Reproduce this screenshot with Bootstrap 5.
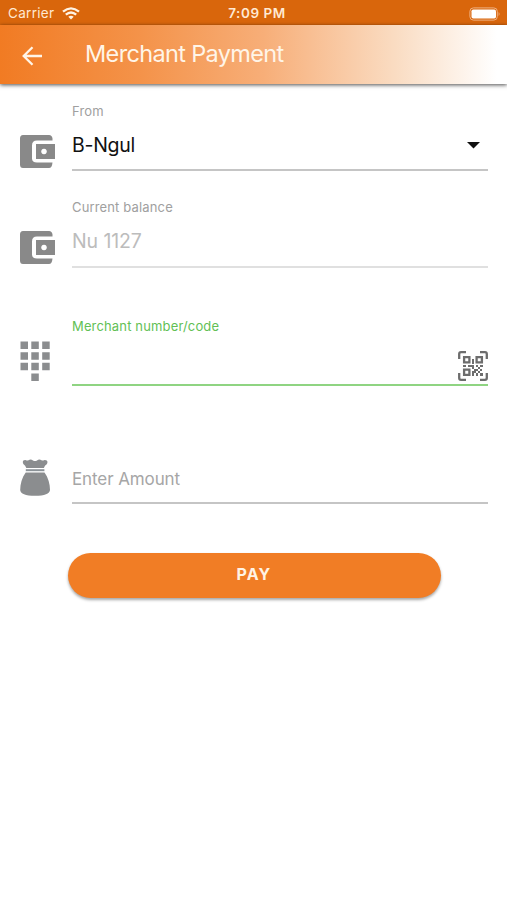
<!DOCTYPE html>
<html lang="en">
<head>
<meta charset="utf-8">
<meta name="viewport" content="width=device-width, initial-scale=1">
<title>Merchant Payment</title>
<link href="https://cdn.jsdelivr.net/npm/bootstrap@5.3.0/dist/css/bootstrap.min.css" rel="stylesheet">
<style>
body{font-family:Inter,"Liberation Sans",sans-serif;background:#fff;color:#111;min-height:900px;overflow:hidden}
.status{height:25px;background:#d9660c;color:#ffe9d2;font-size:13.5px;line-height:25px;padding:2px 6px 0 8px}
.status>*{flex:1 1 0}
.carrier{letter-spacing:.3px}
.clock{font-weight:600;font-size:13.5px;letter-spacing:.55px;padding-left:5px;white-space:nowrap}
.appbar{height:59px;background:linear-gradient(90deg,#f17b23 0%,#f4934a 28%,#f7ae78 52%,#fadcc2 78%,#fff 98%);box-shadow:0 1px 4px rgba(0,0,0,.7);padding-left:20px}
.title{font-size:23.5px;font-weight:400;color:#fff5e8;line-height:30px;margin:-2px 0 0 41px;letter-spacing:-.65px}
.field-row{padding-right:19.5px}
.icon-cell{width:72px;padding-left:19px;flex:none}
.icon-cell svg{margin-bottom:-1.5px}
.r-code .icon-cell svg,.r-amt .icon-cell svg{margin-bottom:0}
.field{border-bottom:2px solid #c5c5c5}
.field label{font-size:13px;line-height:16px;color:#a0a0a0;letter-spacing:.15px}
.value{font-size:19.5px;line-height:24px;margin-top:14px;letter-spacing:-.3px}
.r-from{height:87px}.r-bal{height:96.500px}.r-code{height:118.500px}.r-amt{height:118px}
.r-from .field{padding-top:19px}
.r-bal .field{padding-top:28px;border-color:#e0e0e0}
.r-bal .value{color:#bcbcbc;letter-spacing:-.1px}
.r-code .field{padding-top:50px;border-color:#8fd482}
.r-code label{color:#62bf55}
.r-amt .field{padding-top:82px}
.amount{font-size:17px;line-height:22px;color:#a6a6a6;letter-spacing:-.1px}
.scan{margin-bottom:3px}
.pay{margin:49px 66.500px 0 67.500px;height:45px;border-radius:23px;background:#f17d25;color:#fff3e4;font-weight:700;font-size:16px;line-height:24px;letter-spacing:1.2px;box-shadow:0 2px 3px rgba(0,0,0,.35)}
.pay:hover{background:#f17d25;color:#fff3e4}
svg{display:block}
</style>
</head>
<body>
<svg width="0" height="0" class="position-absolute" aria-hidden="true">
  <symbol id="wallet" viewBox="0 0 36 34">
    <path fill="#898989" d="M4 0.500H30Q33 .5 33.500 4V6H18Q13 6 13 11V24Q13 28 18 28H33.500Q33 33.500 30 33.500H4Q1 33.500 1 30V4Q1 .5 4 .5Z"/>
    <path fill="#898989" fill-rule="evenodd" d="M17 9.500H36V24.500H17ZM25 14.200a2.800 2.800 0 1 0 .01 0Z"/>
  </symbol>
</svg>

<header>
  <div class="status d-flex align-items-center">
    <div class="carrier d-flex align-items-center">Carrier
      <svg class="ms-2" width="18" height="13" viewBox="0 0 18 13" fill="none" stroke="#fff3e4" stroke-width="2.300"><path d="M1 4.700Q9-2 17 4.700M3.800 7.700Q9 3.200 14.200 7.700"/><path d="M9 12.500 6.300 9.800Q9 7.600 11.700 9.800Z" fill="#fff3e4" stroke="none"/></svg>
    </div>
    <div class="clock text-center">7:09 PM</div>
    <div class="d-flex justify-content-end">
      <svg width="32" height="14" viewBox="0 0 32 14"><rect x=".9" y=".9" width="27.400" height="12.200" rx="3.500" fill="none" stroke="#eeb082"/><rect x="2.500" y="2.400" width="24.500" height="9.200" rx="1.800" fill="#fff"/><path d="M29.600 4.900Q31.500 7 29.600 9Z" fill="#eeb082"/></svg>
    </div>
  </div>
  <nav class="appbar d-flex align-items-center" aria-label="Header">
    <svg width="24" height="24" viewBox="0 0 24 24" fill="none" stroke="#fff5e8" stroke-width="2.300"><path d="M22 13H4M12.500 4.200 3.700 13 12.500 21.800"/></svg>
    <h1 class="title">Merchant Payment</h1>
  </nav>
</header>

<main>
  <div class="field-row r-from d-flex">
    <div class="icon-cell d-flex align-items-end pb-1"><svg width="36" height="35"><use href="#wallet"/></svg></div>
    <div class="field flex-grow-1 d-flex flex-column">
      <label>From</label>
      <div class="value d-flex justify-content-between align-items-center pe-2"><span>B-Ngul</span><svg width="13" height="7" viewBox="0 0 13 7"><path d="M0 0H13L6.500 6.500Z" fill="#111"/></svg></div>
    </div>
  </div>
  <div class="field-row r-bal d-flex">
    <div class="icon-cell d-flex align-items-end pb-1"><svg width="36" height="35"><use href="#wallet"/></svg></div>
    <div class="field flex-grow-1 d-flex flex-column">
      <label>Current balance</label>
      <div class="value">Nu 1127</div>
    </div>
  </div>
  <div class="field-row r-code d-flex">
    <div class="icon-cell d-flex align-items-end pb-1"><svg width="32" height="41" viewBox="0 0 32 41" fill="#8b8d8f"><path d="M1.500 .5h7.500v7.500h-7.500zM12.300 .5h7.500v7.500h-7.500zM23.200 .5h7.500v7.500h-7.500zM1.500 11.200h7.500v7.500h-7.500zM12.300 11.200h7.500v7.500h-7.500zM23.200 11.200h7.500v7.500h-7.500zM1.500 21.800h7.500v7.500h-7.500zM12.300 21.800h7.500v7.500h-7.500zM23.200 21.800h7.500v7.500h-7.500zM12.300 32.500h7.500v7.500h-7.500z"/></svg></div>
    <div class="field flex-grow-1 d-flex flex-column">
      <label>Merchant number/code</label>
      <svg class="scan mt-auto ms-auto" width="30" height="30" viewBox="0 0 30 30" fill="none" stroke="#6d6d6d" stroke-width="2.300"><path d="M1.200 8V3Q1.200 1.200 3 1.200H8M22 1.200H27Q28.800 1.200 28.800 3V8M28.800 22V27Q28.800 28.800 27 28.800H22M8 28.800H3Q1.200 28.800 1.200 27V22"/><path d="M6.100 6.100h5.300v5.300H6.100zM18.600 6.100h5.300v5.300h-5.300zM6.100 18.600h5.300v5.300H6.100z"/><path fill="#6d6d6d" stroke="none" d="M14 8h2v5h-2zM5 14h3v2H5zM10 14h6v4h-2v-2h-4zM18 14h2v2h-2zM22 14h3v2h-3zM20 16h2v2h-2zM16 18h4v2h-2v2h-2v3h-2v-5h2zM22 18h2v2h-2zM20 20h2v2h-2zM22 22h3v3h-3zM18 22h2v3h-2z"/></svg>
    </div>
  </div>
  <div class="field-row r-amt d-flex">
    <div class="icon-cell d-flex align-items-end pb-2"><svg width="32" height="37" viewBox="0 0 32 37"><path fill="#8b8d8f" d="M7.300 9Q6.500 6.500 4.300 5Q2.600 1 6.500 1Q9 2.200 10.500 .8Q12 0 14 1.400Q16 2.500 18 1.400Q20 0 21.500 .8Q23 2.200 25.500 1Q29.700 1 28 5Q25.500 6.500 24.900 9ZM6.700 13.500H25.500C29.300 18.500 31 25 31 31Q30.500 36.800 16 36.800Q1.500 36.800 1.200 31C1.200 25 2.900 18.500 6.700 13.500Z"/><path d="M6.800 11.200H25.400" stroke="#8b9297" stroke-width="2"/></svg></div>
    <div class="field flex-grow-1 d-flex flex-column"><div class="amount">Enter Amount</div></div>
  </div>
  <div class="d-flex"><button type="button" class="pay btn border-0 p-0 pb-1 flex-grow-1">PAY</button></div>
</main>
<script src="https://cdn.jsdelivr.net/npm/bootstrap@5.3.0/dist/js/bootstrap.bundle.min.js"></script>
</body>
</html>
